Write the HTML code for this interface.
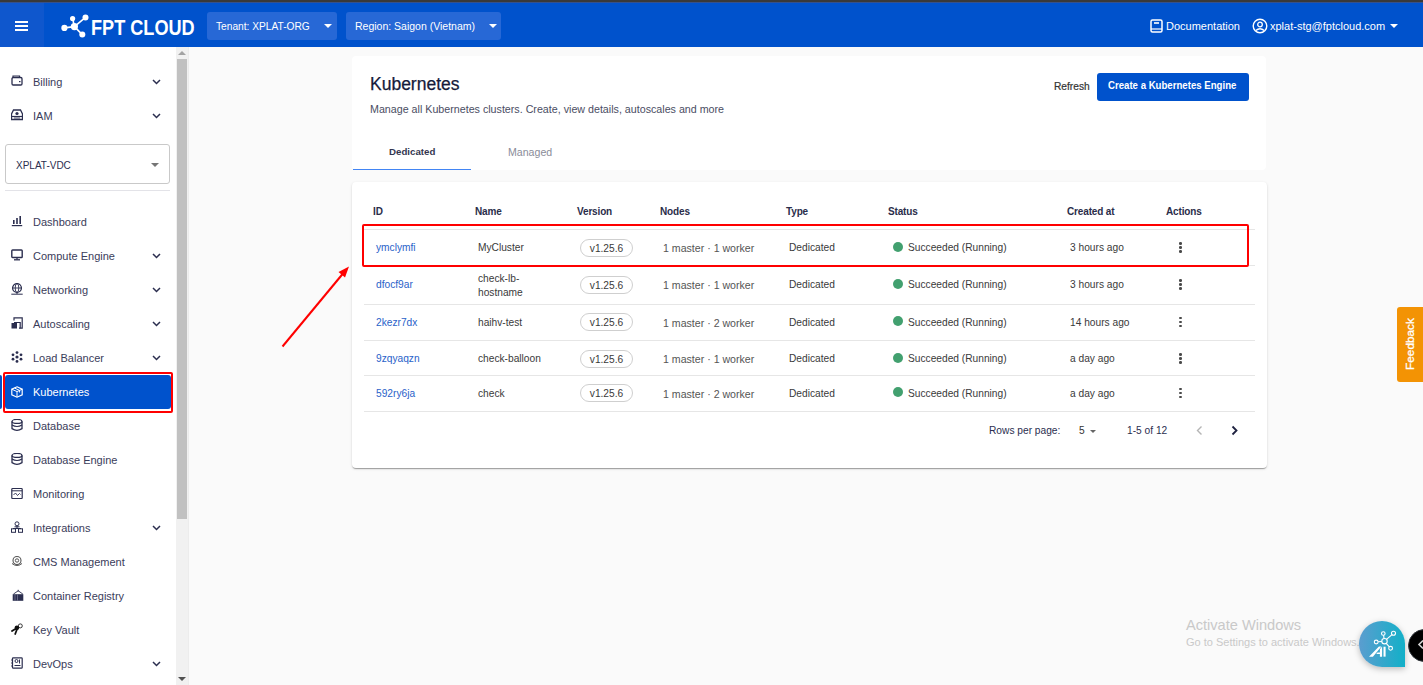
<!DOCTYPE html>
<html><head><meta charset="utf-8">
<style>
*{box-sizing:border-box;margin:0;padding:0}
html,body{width:1423px;height:685px;overflow:hidden;background:#fafafa;font-family:"Liberation Sans",sans-serif;position:relative}
.a{position:absolute;white-space:nowrap}
#topline{left:0;top:0;width:1423px;height:3px;background:linear-gradient(#393939 0,#393939 1.5px,#4a4f60 2px,#1f52b8 3px)}
#hdr{left:0;top:3px;width:1423px;height:44px;background:#0052cc}
#hamb{left:0;top:3px;width:44px;height:44px;background:#0f57cd}
.hl{left:15px;width:13px;height:2px;background:#fff}
.dd{background:#2768d6;border-radius:3px;height:28px;top:12px;color:#fff;font-size:10.5px}
.dd span.t{font-size:10.2px;top:8.5px}
.dd span{position:absolute;top:8px}
.caret{width:0;height:0;border-left:4px solid transparent;border-right:4px solid transparent;border-top:4px solid #fff}
#side{left:0;top:47px;width:176px;height:638px;background:#fff}
#track{left:176px;top:47px;width:12px;height:638px;background:#f1f1f1}
#thumb{left:177px;top:59px;width:10px;height:460px;background:#c1c1c1}
#sbline{left:188px;top:47px;width:1px;height:638px;background:#ececec}
.si{left:33px;font-size:11px;color:#3a3c5a}
.chev{left:153px}
.card{background:#fff;border-radius:4px}
.th{font-size:10px;font-weight:700;color:#2a2d4a;letter-spacing:-0.15px}
.td{font-size:10.2px;color:#3a3a3a}
.idl{color:#2a62c9}
.div{left:364px;width:891px;height:1px;background:#e6e6e6}
.chip{width:53px;height:18px;border:1px solid #cfcfcf;border-radius:9px;font-size:10.2px;color:#3a3a3a;text-align:center;line-height:17.5px}
.dot{width:10px;height:10px;border-radius:5px;background:#42a06f}
.keb{width:2.6px;height:2.6px;border-radius:1.3px;background:#4a4a4a}
</style></head><body>
<div class="a" id="topline"></div>
<div class="a" id="hdr"></div>
<div class="a" id="hamb"></div>
<div class="a hl" style="top:21px"></div>
<div class="a hl" style="top:25px"></div>
<div class="a hl" style="top:29px"></div>
<!-- logo -->
<svg class="a" style="left:58px;top:12px" width="34" height="28" viewBox="58 12 34 28">
<g stroke="#fff" stroke-width="1.6" fill="none">
<line x1="74.4" y1="26.6" x2="64.4" y2="27.9"/><line x1="74.4" y1="26.6" x2="72.6" y2="18.5"/><line x1="74.4" y1="26.6" x2="85.5" y2="17.4"/><line x1="74.4" y1="26.6" x2="82.3" y2="34.6"/></g>
<g fill="#fff"><circle cx="74.4" cy="26.6" r="3.6"/><circle cx="64.4" cy="27.9" r="3.1"/><circle cx="72.6" cy="18.5" r="2.6"/><circle cx="85.5" cy="17.4" r="3"/><circle cx="82.3" cy="34.6" r="3"/></g>
</svg>
<div class="a" style="left:91px;top:14.5px;font-size:22.5px;font-weight:700;color:#fff;transform:scaleX(0.805);transform-origin:0 0">FPT CLOUD</div>
<div class="a dd" style="left:207px;width:130px"><span class="t" style="left:9px">Tenant: XPLAT-ORG</span><div class="a caret" style="left:117px;top:12px"></div></div>
<div class="a dd" style="left:346px;width:155px"><span style="left:9px">Region: Saigon (Vietnam)</span><div class="a caret" style="left:143px;top:12px"></div></div>
<!-- right header -->
<svg class="a" style="left:1150px;top:19px" width="13" height="14" viewBox="0 0 13 14"><rect x="1" y="1" width="11" height="12" rx="1.5" fill="none" stroke="#fff" stroke-width="1.5"/><line x1="1" y1="10" x2="12" y2="10" stroke="#fff" stroke-width="1.2"/><rect x="4" y="3.2" width="5" height="1.6" fill="#fff"/></svg>
<div class="a" style="left:1166px;top:20px;font-size:11px;color:#fff">Documentation</div>
<svg class="a" style="left:1252px;top:18px" width="16" height="16" viewBox="0 0 16 16"><circle cx="8" cy="8" r="6.8" fill="none" stroke="#fff" stroke-width="1.4"/><circle cx="8" cy="6.5" r="2.3" fill="none" stroke="#fff" stroke-width="1.3"/><path d="M3.8 12.6 Q8 8.8 12.2 12.6" fill="none" stroke="#fff" stroke-width="1.3"/></svg>
<div class="a" style="left:1270px;top:20px;font-size:11px;color:#fff">xplat-stg@fptcloud.com</div>
<div class="a caret" style="left:1390px;top:24px"></div>

<!-- sidebar -->
<div class="a" id="side"></div>
<div class="a" id="track"></div>
<div class="a" id="thumb"></div>
<div class="a" id="sbline"></div>
<div class="a" style="left:0;top:375px;width:2px;height:34px;background:#0052cc;border-radius:0 2px 2px 0"></div>
<div class="a" style="left:3px;top:372px;width:170px;height:41px;border:2px solid #f00;border-radius:2px"></div>
<div class="a" style="left:5px;top:374.5px;width:166px;height:34.5px;background:#0052cc;border-radius:3px"></div>
<svg class="a" style="left:11px;top:75px" width="12" height="12" viewBox="0 0 12 12"><rect x="1" y="2.5" width="10" height="7.5" rx="1.2" fill="none" stroke="#2b2e4f" stroke-width="1.3"/><path d="M2 2.5 V1 H8.5 V2.5" fill="none" stroke="#2b2e4f" stroke-width="1.2"/><rect x="8" y="6" width="1.5" height="1.2" fill="#2b2e4f"/></svg>
<div class="a si" style="top:75.5px">Billing</div>
<svg class="a" style="left:152px;top:78.5px" width="9" height="6" viewBox="0 0 9 6"><path d="M1 1 L4.5 4.5 L8 1" fill="none" stroke="#2b2e4f" stroke-width="1.5"/></svg>
<svg class="a" style="left:11px;top:109px" width="12" height="12" viewBox="0 0 12 12"><path d="M2.5 1 H9.5 L11.5 5 V10.5 H0.5 V5 Z" fill="none" stroke="#2b2e4f" stroke-width="1.3"/><line x1="0.5" y1="7.5" x2="11.5" y2="7.5" stroke="#2b2e4f" stroke-width="1.2"/><circle cx="6" cy="4.5" r="1.6" fill="#2b2e4f"/><line x1="3" y1="9" x2="9" y2="9" stroke="#2b2e4f" stroke-width="0.8"/></svg>
<div class="a si" style="top:109.5px">IAM</div>
<svg class="a" style="left:152px;top:112.5px" width="9" height="6" viewBox="0 0 9 6"><path d="M1 1 L4.5 4.5 L8 1" fill="none" stroke="#2b2e4f" stroke-width="1.5"/></svg>
<svg class="a" style="left:11px;top:215px" width="12" height="12" viewBox="0 0 12 12"><rect x="2" y="5" width="1.6" height="4" fill="#2b2e4f"/><rect x="5.2" y="3" width="1.6" height="6" fill="#2b2e4f"/><rect x="8.4" y="1" width="1.6" height="8" fill="#2b2e4f"/><rect x="0.8" y="10" width="10.4" height="1.2" fill="#2b2e4f"/></svg>
<div class="a si" style="top:215.5px">Dashboard</div>
<svg class="a" style="left:11px;top:249px" width="12" height="12" viewBox="0 0 12 12"><rect x="0.8" y="1" width="10.4" height="7.5" rx="0.8" fill="none" stroke="#2b2e4f" stroke-width="1.4"/><line x1="6" y1="8.5" x2="6" y2="10.5" stroke="#2b2e4f" stroke-width="1.3"/><line x1="3" y1="10.8" x2="9" y2="10.8" stroke="#2b2e4f" stroke-width="1.3"/></svg>
<div class="a si" style="top:249.5px">Compute Engine</div>
<svg class="a" style="left:152px;top:252.5px" width="9" height="6" viewBox="0 0 9 6"><path d="M1 1 L4.5 4.5 L8 1" fill="none" stroke="#2b2e4f" stroke-width="1.5"/></svg>
<svg class="a" style="left:11px;top:283px" width="12" height="12" viewBox="0 0 12 12"><circle cx="6" cy="5" r="4.4" fill="none" stroke="#2b2e4f" stroke-width="1.3"/><ellipse cx="6" cy="5" rx="1.8" ry="4.4" fill="none" stroke="#2b2e4f" stroke-width="0.9"/><line x1="1.6" y1="5" x2="10.4" y2="5" stroke="#2b2e4f" stroke-width="0.9"/><line x1="6" y1="9.4" x2="6" y2="11" stroke="#2b2e4f" stroke-width="1"/><line x1="0.3" y1="11.2" x2="11.7" y2="11.2" stroke="#2b2e4f" stroke-width="1"/></svg>
<div class="a si" style="top:283.5px">Networking</div>
<svg class="a" style="left:152px;top:286.5px" width="9" height="6" viewBox="0 0 9 6"><path d="M1 1 L4.5 4.5 L8 1" fill="none" stroke="#2b2e4f" stroke-width="1.5"/></svg>
<svg class="a" style="left:11px;top:317px" width="12" height="12" viewBox="0 0 12 12"><path d="M3 3.5 V0.8 H11.2 V11.2 H8" fill="none" stroke="#2b2e4f" stroke-width="1.2"/><path d="M3 5.5 H9.2 V11.2" fill="none" stroke="#2b2e4f" stroke-width="1.2"/><rect x="0.5" y="6" width="5.5" height="5.5" fill="#2b2e4f"/></svg>
<div class="a si" style="top:317.5px">Autoscaling</div>
<svg class="a" style="left:152px;top:320.5px" width="9" height="6" viewBox="0 0 9 6"><path d="M1 1 L4.5 4.5 L8 1" fill="none" stroke="#2b2e4f" stroke-width="1.5"/></svg>
<svg class="a" style="left:11px;top:351px" width="12" height="12" viewBox="0 0 12 12"><circle cx="6" cy="6" r="1.6" fill="#2b2e4f"/><circle cx="6" cy="1.6" r="1.4" fill="#2b2e4f"/><circle cx="6" cy="10.4" r="1.4" fill="#2b2e4f"/><circle cx="2" cy="3.8" r="1.4" fill="#2b2e4f"/><circle cx="10" cy="3.8" r="1.4" fill="#2b2e4f"/><circle cx="2" cy="8.2" r="1.4" fill="#2b2e4f"/><circle cx="10" cy="8.2" r="1.4" fill="#2b2e4f"/></svg>
<div class="a si" style="top:351.5px">Load Balancer</div>
<svg class="a" style="left:152px;top:354.5px" width="9" height="6" viewBox="0 0 9 6"><path d="M1 1 L4.5 4.5 L8 1" fill="none" stroke="#2b2e4f" stroke-width="1.5"/></svg>
<svg class="a" style="left:11px;top:386px" width="12" height="12" viewBox="0 0 12 12"><path d="M6 0.8 L11.2 3.2 V8.8 L6 11.2 L0.8 8.8 V3.2 Z" fill="none" stroke="#fff" stroke-width="1.2"/><path d="M0.8 3.2 L6 5.6 L11.2 3.2 M6 5.6 V11.2 M3.4 2 L8.6 4.4 V6.5" fill="none" stroke="#fff" stroke-width="1"/></svg>
<div class="a si" style="top:385.5px;color:#fff">Kubernetes</div>
<svg class="a" style="left:11px;top:419px" width="12" height="12" viewBox="0 0 12 12"><ellipse cx="6" cy="2.4" rx="5" ry="2" fill="none" stroke="#2b2e4f" stroke-width="1.3"/><path d="M1 2.4 V9.6 Q6 13 11 9.6 V2.4" fill="none" stroke="#2b2e4f" stroke-width="1.3"/><path d="M1 6 Q6 9 11 6" fill="none" stroke="#2b2e4f" stroke-width="1.2"/></svg>
<div class="a si" style="top:419.5px">Database</div>
<svg class="a" style="left:11px;top:453px" width="12" height="12" viewBox="0 0 12 12"><ellipse cx="6" cy="2.4" rx="5" ry="2" fill="none" stroke="#2b2e4f" stroke-width="1.3"/><path d="M1 2.4 V9.6 Q6 13 11 9.6 V2.4" fill="none" stroke="#2b2e4f" stroke-width="1.3"/><path d="M1 6 Q6 9 11 6" fill="none" stroke="#2b2e4f" stroke-width="1.2"/></svg>
<div class="a si" style="top:453.5px">Database Engine</div>
<svg class="a" style="left:11px;top:487px" width="12" height="12" viewBox="0 0 12 12"><rect x="0.8" y="1.5" width="10.4" height="10" rx="0.8" fill="none" stroke="#2b2e4f" stroke-width="1.2"/><line x1="0.8" y1="3.8" x2="11.2" y2="3.8" stroke="#2b2e4f" stroke-width="1"/><path d="M2.5 8 L4.5 6 L6.5 8.5 L8.5 6.5 L9.5 7.5" fill="none" stroke="#2b2e4f" stroke-width="0.9"/></svg>
<div class="a si" style="top:487.5px">Monitoring</div>
<svg class="a" style="left:11px;top:521px" width="12" height="12" viewBox="0 0 12 12"><circle cx="6" cy="2.8" r="2" fill="none" stroke="#2b2e4f" stroke-width="1"/><path d="M3.5 5.8 H8.5 M6 5 V7.5 M2 7.5 H10" fill="none" stroke="#2b2e4f" stroke-width="1"/><rect x="0.5" y="7.8" width="4" height="3.5" fill="none" stroke="#2b2e4f" stroke-width="1"/><rect x="7.5" y="7.8" width="4" height="3.5" fill="none" stroke="#2b2e4f" stroke-width="1"/></svg>
<div class="a si" style="top:521.5px">Integrations</div>
<svg class="a" style="left:152px;top:524.5px" width="9" height="6" viewBox="0 0 9 6"><path d="M1 1 L4.5 4.5 L8 1" fill="none" stroke="#2b2e4f" stroke-width="1.5"/></svg>
<svg class="a" style="left:11px;top:555px" width="12" height="12" viewBox="0 0 12 12"><circle cx="6" cy="5.5" r="4" fill="none" stroke="#555" stroke-width="1.1"/><circle cx="6" cy="5.5" r="1.7" fill="none" stroke="#555" stroke-width="1"/><path d="M1 8.5 Q6 12.5 11 8.5" fill="none" stroke="#555" stroke-width="1"/></svg>
<div class="a si" style="top:555.5px">CMS Management</div>
<svg class="a" style="left:11px;top:589px" width="13" height="12" viewBox="0 0 13 12"><path d="M7.2 0.8 V2.5 M7.2 1.8 L2.5 5 M7.2 1.8 L11.8 5" stroke="#2b2e4f" stroke-width="0.9" fill="none"/><rect x="1.7" y="5.2" width="10.6" height="6.6" fill="#2b2e4f"/><line x1="4" y1="5.5" x2="4" y2="11.5" stroke="#8d8fa8" stroke-width="0.6"/><line x1="6.5" y1="5.5" x2="6.5" y2="11.5" stroke="#8d8fa8" stroke-width="0.6"/></svg>
<div class="a si" style="top:589.5px">Container Registry</div>
<svg class="a" style="left:11px;top:623px" width="12" height="12" viewBox="0 0 12 12"><circle cx="9.3" cy="2.9" r="2" fill="none" stroke="#222" stroke-width="0.9"/><circle cx="5.9" cy="4.8" r="2.3" fill="#111"/><path d="M5.5 5.2 L1 8 M6.3 5.5 L4.2 11" stroke="#111" stroke-width="1.8" fill="none" stroke-linecap="round"/></svg>
<div class="a si" style="top:623.5px">Key Vault</div>
<svg class="a" style="left:11px;top:657px" width="12" height="12" viewBox="0 0 12 12"><rect x="1.5" y="0.8" width="9.7" height="10.4" rx="0.8" fill="none" stroke="#2b2e4f" stroke-width="1.2"/><circle cx="5.5" cy="4" r="1.5" fill="none" stroke="#2b2e4f" stroke-width="1"/><line x1="8.5" y1="2.5" x2="8.5" y2="6.5" stroke="#2b2e4f" stroke-width="1"/><line x1="3.5" y1="8.5" x2="9.5" y2="8.5" stroke="#2b2e4f" stroke-width="1"/><line x1="0.2" y1="3" x2="1.8" y2="3" stroke="#2b2e4f" stroke-width="1"/><line x1="0.2" y1="6" x2="1.8" y2="6" stroke="#2b2e4f" stroke-width="1"/><line x1="0.2" y1="9" x2="1.8" y2="9" stroke="#2b2e4f" stroke-width="1"/></svg>
<div class="a si" style="top:657.5px">DevOps</div>
<svg class="a" style="left:152px;top:660.5px" width="9" height="6" viewBox="0 0 9 6"><path d="M1 1 L4.5 4.5 L8 1" fill="none" stroke="#2b2e4f" stroke-width="1.5"/></svg>
<div class="a" style="left:5px;top:144px;width:165px;height:40px;border:1px solid #c9c9c9;border-radius:3px"></div>
<div class="a" style="left:16px;top:159.5px;font-size:10px;color:#2b2e4f">XPLAT-VDC</div>
<div class="a caret" style="left:151px;top:163px;border-top-color:#757575;border-left-width:4px;border-right-width:4px;border-top-width:4px"></div>
<div class="a" style="left:5px;top:190px;width:165px;height:1px;background:#e3e3e8"></div>
<div class="a caret" style="left:178px;top:51px;border-top:none;border-bottom:4px solid #a3a3a3"></div>
<div class="a caret" style="left:178px;top:677px;border-top-color:#505050"></div>
<!--SIDEEND-->
<!--MAIN-->
<div class="a card" style="left:352px;top:56px;width:914px;height:114px"></div>
<div class="a" style="left:370px;top:74px;font-size:17.5px;color:#151a3a;-webkit-text-stroke:0.25px #151a3a">Kubernetes</div>
<div class="a" style="left:370px;top:102.5px;font-size:10.7px;color:#4a4d63">Manage all Kubernetes clusters. Create, view details, autoscales and more</div>
<div class="a" style="left:389px;top:146px;font-size:9.7px;font-weight:700;color:#33364f">Dedicated</div>
<div class="a" style="left:508px;top:146px;font-size:10.6px;color:#8a8c99">Managed</div>
<div class="a" style="left:353px;top:168.5px;width:118px;height:1.8px;background:#4285f4"></div>
<div class="a" style="left:1054px;top:80.5px;font-size:10.2px;color:#333;-webkit-text-stroke:0.2px #333">Refresh</div>
<div class="a" style="left:1097px;top:73px;width:152px;height:28px;background:#0052cc;border-radius:3px"></div>
<div class="a" style="left:1108px;top:79px;font-size:11px;font-weight:700;color:#fff;transform:scaleX(0.875);transform-origin:0 0">Create a Kubernetes Engine</div>
<div class="a card" style="left:352px;top:182px;width:915px;height:286px;box-shadow:0 2px 1px -1px rgba(0,0,0,.2),0 1px 1px 0 rgba(0,0,0,.14),0 1px 3px 0 rgba(0,0,0,.12)"></div>
<div class="a th" style="left:373px;top:206px">ID</div>
<div class="a th" style="left:475px;top:206px">Name</div>
<div class="a th" style="left:577px;top:206px">Version</div>
<div class="a th" style="left:660px;top:206px">Nodes</div>
<div class="a th" style="left:786px;top:206px">Type</div>
<div class="a th" style="left:888px;top:206px">Status</div>
<div class="a th" style="left:1067px;top:206px">Created at</div>
<div class="a th" style="left:1166px;top:206px">Actions</div>
<div class="a div" style="top:229px"></div>
<div class="a div" style="top:265px"></div>
<div class="a div" style="top:304px"></div>
<div class="a div" style="top:340px"></div>
<div class="a div" style="top:375px"></div>
<div class="a div" style="top:411px"></div>
<div class="a td idl" style="left:376px;top:242.0px">ymclymfi</div>
<div class="a td" style="left:478px;top:242.0px">MyCluster</div>
<div class="a chip" style="left:580px;top:238.5px">v1.25.6</div>
<div class="a td" style="left:663px;top:242.0px;font-size:10.6px;color:#555">1 master · 1 worker</div>
<div class="a td" style="left:789px;top:242.0px">Dedicated</div>
<div class="a dot" style="left:893px;top:241.7px"></div>
<div class="a td" style="left:908px;top:242.0px">Succeeded (Running)</div>
<div class="a td" style="left:1070px;top:242.0px">3 hours ago</div>
<div class="a keb" style="left:1179px;top:242.0px"></div>
<div class="a keb" style="left:1179px;top:246.0px"></div>
<div class="a keb" style="left:1179px;top:250.0px"></div>
<div class="a td idl" style="left:376px;top:279.25px">dfocf9ar</div>
<div class="a td" style="left:478px;top:271.75px;line-height:14px">check-lb-<br>hostname</div>
<div class="a chip" style="left:580px;top:275.75px">v1.25.6</div>
<div class="a td" style="left:663px;top:279.25px;font-size:10.6px;color:#555">1 master · 1 worker</div>
<div class="a td" style="left:789px;top:279.25px">Dedicated</div>
<div class="a dot" style="left:893px;top:278.95px"></div>
<div class="a td" style="left:908px;top:279.25px">Succeeded (Running)</div>
<div class="a td" style="left:1070px;top:279.25px">3 hours ago</div>
<div class="a keb" style="left:1179px;top:279.25px"></div>
<div class="a keb" style="left:1179px;top:283.25px"></div>
<div class="a keb" style="left:1179px;top:287.25px"></div>
<div class="a td idl" style="left:376px;top:316.5px">2kezr7dx</div>
<div class="a td" style="left:478px;top:316.5px">haihv-test</div>
<div class="a chip" style="left:580px;top:313px">v1.25.6</div>
<div class="a td" style="left:663px;top:316.5px;font-size:10.6px;color:#555">1 master · 2 worker</div>
<div class="a td" style="left:789px;top:316.5px">Dedicated</div>
<div class="a dot" style="left:893px;top:316.2px"></div>
<div class="a td" style="left:908px;top:316.5px">Succeeded (Running)</div>
<div class="a td" style="left:1070px;top:316.5px">14 hours ago</div>
<div class="a keb" style="left:1179px;top:316.5px"></div>
<div class="a keb" style="left:1179px;top:320.5px"></div>
<div class="a keb" style="left:1179px;top:324.5px"></div>
<div class="a td idl" style="left:376px;top:353.0px">9zqyaqzn</div>
<div class="a td" style="left:478px;top:353.0px">check-balloon</div>
<div class="a chip" style="left:580px;top:349.5px">v1.25.6</div>
<div class="a td" style="left:663px;top:353.0px;font-size:10.6px;color:#555">1 master · 1 worker</div>
<div class="a td" style="left:789px;top:353.0px">Dedicated</div>
<div class="a dot" style="left:893px;top:352.7px"></div>
<div class="a td" style="left:908px;top:353.0px">Succeeded (Running)</div>
<div class="a td" style="left:1070px;top:353.0px">a day ago</div>
<div class="a keb" style="left:1179px;top:353.0px"></div>
<div class="a keb" style="left:1179px;top:357.0px"></div>
<div class="a keb" style="left:1179px;top:361.0px"></div>
<div class="a td idl" style="left:376px;top:387.75px">592ry6ja</div>
<div class="a td" style="left:478px;top:387.75px">check</div>
<div class="a chip" style="left:580px;top:384.25px">v1.25.6</div>
<div class="a td" style="left:663px;top:387.75px;font-size:10.6px;color:#555">1 master · 2 worker</div>
<div class="a td" style="left:789px;top:387.75px">Dedicated</div>
<div class="a dot" style="left:893px;top:387.45px"></div>
<div class="a td" style="left:908px;top:387.75px">Succeeded (Running)</div>
<div class="a td" style="left:1070px;top:387.75px">a day ago</div>
<div class="a keb" style="left:1179px;top:387.75px"></div>
<div class="a keb" style="left:1179px;top:391.75px"></div>
<div class="a keb" style="left:1179px;top:395.75px"></div>
<div class="a" style="left:362px;top:224px;width:887px;height:43px;border:2px solid #f00;border-radius:2px"></div>
<div class="a td" style="left:989px;top:425px;color:#2b2e4f">Rows per page:</div>
<div class="a td" style="left:1079px;top:425px;color:#333">5</div>
<div class="a caret" style="left:1090px;top:430px;border-top-color:#666;border-left-width:3.5px;border-right-width:3.5px;border-top-width:3.5px"></div>
<div class="a td" style="left:1127px;top:425px;color:#2b2e4f">1-5 of 12</div>
<svg class="a" style="left:1195px;top:425px" width="9" height="11" viewBox="0 0 9 11"><path d="M6.5 1.5 L2.5 5.5 L6.5 9.5" fill="none" stroke="#b5b5b5" stroke-width="1.4"/></svg>
<svg class="a" style="left:1230px;top:425px" width="9" height="11" viewBox="0 0 9 11"><path d="M2.5 1.5 L6.5 5.5 L2.5 9.5" fill="none" stroke="#1e2240" stroke-width="1.8"/></svg>
<svg class="a" style="left:270px;top:255px" width="90" height="100" viewBox="270 255 90 100"><line x1="282.5" y1="346.5" x2="343" y2="273.5" stroke="#f00" stroke-width="2"/><path d="M349 266.5 L338.5 272 L345 277.5 Z" fill="#f00"/></svg>
<div class="a" style="left:1397px;top:306.5px;width:30px;height:75px;background:#f39304;border-radius:3px"></div>
<div class="a" style="left:1382px;top:337px;width:56px;font-size:11.8px;color:#fff;-webkit-text-stroke:0.3px #fff;transform:rotate(-90deg);text-align:center">Feedback</div>
<div class="a" style="left:1186px;top:617px;font-size:14.6px;color:#c9c9c9">Activate Windows</div>
<div class="a" style="left:1186px;top:635.5px;font-size:11px;color:#c9c9c9">Go to Settings to activate Windows.</div>
<div class="a" style="left:1359px;top:621px;width:46px;height:46px;border-radius:23px 23px 0 23px;background:linear-gradient(90deg,#5b9dcf,#12b0c8);box-shadow:0 2px 6px rgba(0,0,0,0.25)"></div>
<svg class="a" style="left:1359px;top:621px" width="46" height="46" viewBox="0 0 46 46"><g stroke="#fff" stroke-width="1.1" fill="none"><circle cx="25.5" cy="20.2" r="2.7"/><circle cx="17.2" cy="21" r="1.9"/><circle cx="24.3" cy="12.5" r="1.8"/><circle cx="34.5" cy="12.3" r="2"/><circle cx="31.6" cy="27.3" r="1.9"/><line x1="22.8" y1="20.5" x2="19.1" y2="20.8"/><line x1="25" y1="17.5" x2="24.6" y2="14.3"/><line x1="27.5" y1="18.3" x2="33" y2="13.6"/><line x1="27.2" y1="22.3" x2="30.4" y2="25.8"/></g><path d="M10 35.65 L13.9 35.65 L22.4 25.5 L19.9 25.5 Z M23.1 25.5 L23.1 35.65 L20.9 35.65 L20.9 33 L17.2 33 L18.5 31.4 L20.9 31.4 L20.9 28.2 Z" fill="#fff"/><rect x="24.5" y="25.7" width="2.1" height="9.95" fill="#fff"/></svg>
<div class="a" style="left:1408px;top:628.5px;width:33px;height:33px;border-radius:17px;background:#000;border:1.5px solid #2d3238"></div>
<svg class="a" style="left:1417px;top:639px" width="9" height="11" viewBox="0 0 9 11"><path d="M6 1.5 L2 5.5 L6 9.5" fill="none" stroke="#d0d0d0" stroke-width="1.6"/></svg>
<!--MAINEND-->
</body></html>
